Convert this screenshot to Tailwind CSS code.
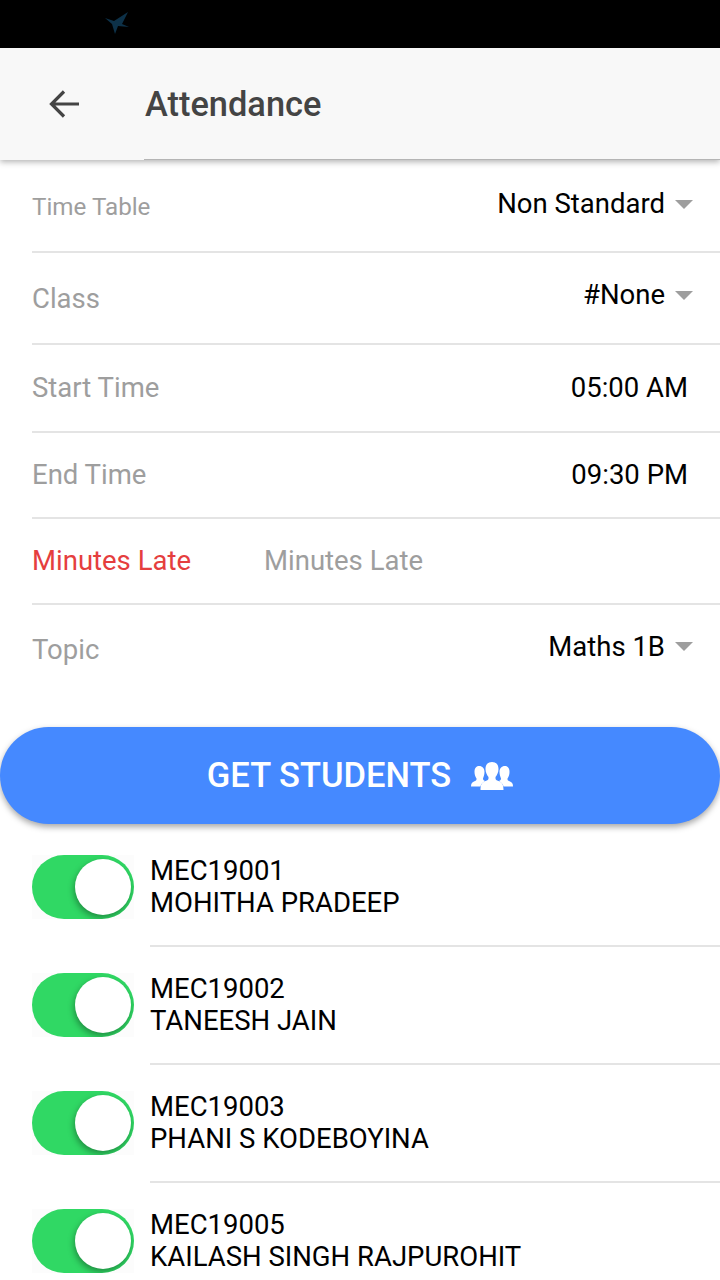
<!DOCTYPE html>
<html lang="en">
<head>
  <meta charset="UTF-8">
  <title>Attendance</title>
  <script src="https://cdn.jsdelivr.net/npm/@tailwindcss/browser@4"></script>
</head>
<body class="bg-white font-['Roboto',sans-serif] w-[720px] h-[1280px] overflow-hidden">
  <!-- status bar -->
  <div class="h-12 bg-black flex items-center pl-[104px]">
    <svg width="28" height="26" viewBox="0 0 28 26"><path d="M1 7 L10 10 L24 1 L18 13 L25 16 L14 15 L11 23 L8 13 Z" fill="#0f3a55" opacity="0.85"/></svg>
  </div>

  <!-- header -->
  <header class="relative z-10 h-28 bg-[#f8f8f8] flex items-center shadow-[0_2px_6px_rgba(0,0,0,0.3)]">
    <svg class="ml-[48px]" width="32" height="32" viewBox="0 0 32 32" fill="none" stroke="#444" stroke-width="3.2"><path d="M31 16H4M16 3.5 3.5 16 16 28.5"/></svg>
    <h1 class="ml-[65px] mt-[2px] text-[34.4px] font-medium text-[#444]">Attendance</h1>
    <div class="absolute bottom-0 left-[144px] right-0 h-px bg-[#b5b5b5]"></div>
  </header>

  <!-- form -->
  <section class="pl-8 text-[27.5px]">
    <div class="h-[93px] flex items-center justify-between border-b-2 border-[#e4e4e4]">
      <span class="text-[24.2px] text-[#9e9e9e] mt-1">Time Table</span>
      <span class="flex items-center gap-[10px] pr-[27px] text-black -mt-[3px]">Non Standard <i class="w-0 h-0 border-x-[9.5px] border-x-transparent border-t-[9px] border-t-[#9e9e9e]"></i></span>
    </div>
    <div class="h-[92px] flex items-center justify-between border-b-2 border-[#e4e4e4]">
      <span class="text-[#9e9e9e] mt-[2px]">Class</span>
      <span class="flex items-center gap-[10px] pr-[27px] text-black -mt-[6px]">#None <i class="w-0 h-0 border-x-[9.5px] border-x-transparent border-t-[9px] border-t-[#9e9e9e]"></i></span>
    </div>
    <div class="h-[88px] flex items-center justify-between border-b-2 border-[#e4e4e4]">
      <span class="text-[#9e9e9e]">Start Time</span>
      <span class="pr-8 text-black">05:00 AM</span>
    </div>
    <div class="h-[86px] flex items-center justify-between border-b-2 border-[#e4e4e4]">
      <span class="text-[#9e9e9e]">End Time</span>
      <span class="pr-8 text-black">09:30 PM</span>
    </div>
    <div class="h-[86px] flex items-center border-b-2 border-[#e4e4e4]">
      <span class="w-[232px] text-[#e53e3e]">Minutes Late</span>
      <span class="text-[#9e9e9e]">Minutes Late</span>
    </div>
    <div class="h-[89px] flex items-center justify-between">
      <span class="text-[#9e9e9e]">Topic</span>
      <span class="flex items-center gap-[10px] pr-[27px] text-black -mt-[6px]">Maths 1B <i class="w-0 h-0 border-x-[9.5px] border-x-transparent border-t-[9px] border-t-[#9e9e9e]"></i></span>
    </div>
  </section>

  <!-- button -->
  <button class="mt-[33px] w-full h-[97px] rounded-full bg-[#4589ff] text-white text-[34.5px] font-medium flex items-center justify-center gap-5 shadow-[0_3px_6px_rgba(0,0,0,0.35)]">
    GET STUDENTS
    <svg width="42" height="28" viewBox="0 0 42 28" fill="#fff">
      <path d="M8 4c3.500 0 5.500 2.500 5.500 6 0 3-1 5-1.500 6.500 0 1 .5 2 2 2.500-2.500 1.500-4 3-4.500 5.500H0c0-3 1-4 3-5l2-1c.5-.5.5-1 .5-2-1-1.500-2-3.500-2-6.500C3.500 6.500 5 4 8 4Z"/>
      <path d="M34 4c-3.500 0-5.500 2.500-5.500 6 0 3 1 5 1.500 6.500 0 1-.5 2-2 2.500 2.500 1.500 4 3 4.500 5.500H42c0-3-1-4-3-5l-2-1c-.5-.5-.5-1-.5-2 1-1.500 2-3.500 2-6.500 0-3.500-1.500-6-4.500-6Z"/>
      <path d="M21 0c4 0 6.500 2.500 6.500 7 0 3.500-1.500 6-3 8v1.500c0 1 1 2 3 2.500 3.500 1.200 5 3.500 5 9h-23c0-5.500 1.500-7.800 5-9 2-.5 3-1.500 3-2.500V15c-1.500-2-3-4.500-3-8 0-4.500 2.500-7 6.500-7Z"/>
    </svg>
  </button>

  <!-- students -->
  <ul class="pt-[5px] text-[27.5px] leading-8 text-black">
    <li class="h-[118px] flex">
      <div class="ml-8 mt-[26px] w-[102px] h-16 bg-[#fcfcfc]">
        <div class="relative w-full h-full rounded-full overflow-hidden bg-[#30d864]">
          <span class="absolute right-[3px] top-1 w-14 h-14 rounded-full bg-white shadow-[-1px_3px_6px_rgba(0,0,0,0.35)]"></span>
        </div>
      </div>
      <div class="ml-4 flex-1 border-b-2 border-[#e4e4e4] pt-[26px]"><p>MEC19001</p><p>MOHITHA PRADEEP</p></div>
    </li>
    <li class="h-[118px] flex">
      <div class="ml-8 mt-[26px] w-[102px] h-16 bg-[#fcfcfc]">
        <div class="relative w-full h-full rounded-full overflow-hidden bg-[#30d864]">
          <span class="absolute right-[3px] top-1 w-14 h-14 rounded-full bg-white shadow-[-1px_3px_6px_rgba(0,0,0,0.35)]"></span>
        </div>
      </div>
      <div class="ml-4 flex-1 border-b-2 border-[#e4e4e4] pt-[26px]"><p>MEC19002</p><p>TANEESH JAIN</p></div>
    </li>
    <li class="h-[118px] flex">
      <div class="ml-8 mt-[26px] w-[102px] h-16 bg-[#fcfcfc]">
        <div class="relative w-full h-full rounded-full overflow-hidden bg-[#30d864]">
          <span class="absolute right-[3px] top-1 w-14 h-14 rounded-full bg-white shadow-[-1px_3px_6px_rgba(0,0,0,0.35)]"></span>
        </div>
      </div>
      <div class="ml-4 flex-1 border-b-2 border-[#e4e4e4] pt-[26px]"><p>MEC19003</p><p>PHANI S KODEBOYINA</p></div>
    </li>
    <li class="h-[118px] flex">
      <div class="ml-8 mt-[26px] w-[102px] h-16 bg-[#fcfcfc]">
        <div class="relative w-full h-full rounded-full overflow-hidden bg-[#30d864]">
          <span class="absolute right-[3px] top-1 w-14 h-14 rounded-full bg-white shadow-[-1px_3px_6px_rgba(0,0,0,0.35)]"></span>
        </div>
      </div>
      <div class="ml-4 flex-1 pt-[26px]"><p>MEC19005</p><p>KAILASH SINGH RAJPUROHIT</p></div>
    </li>
  </ul>
</body>
</html>
